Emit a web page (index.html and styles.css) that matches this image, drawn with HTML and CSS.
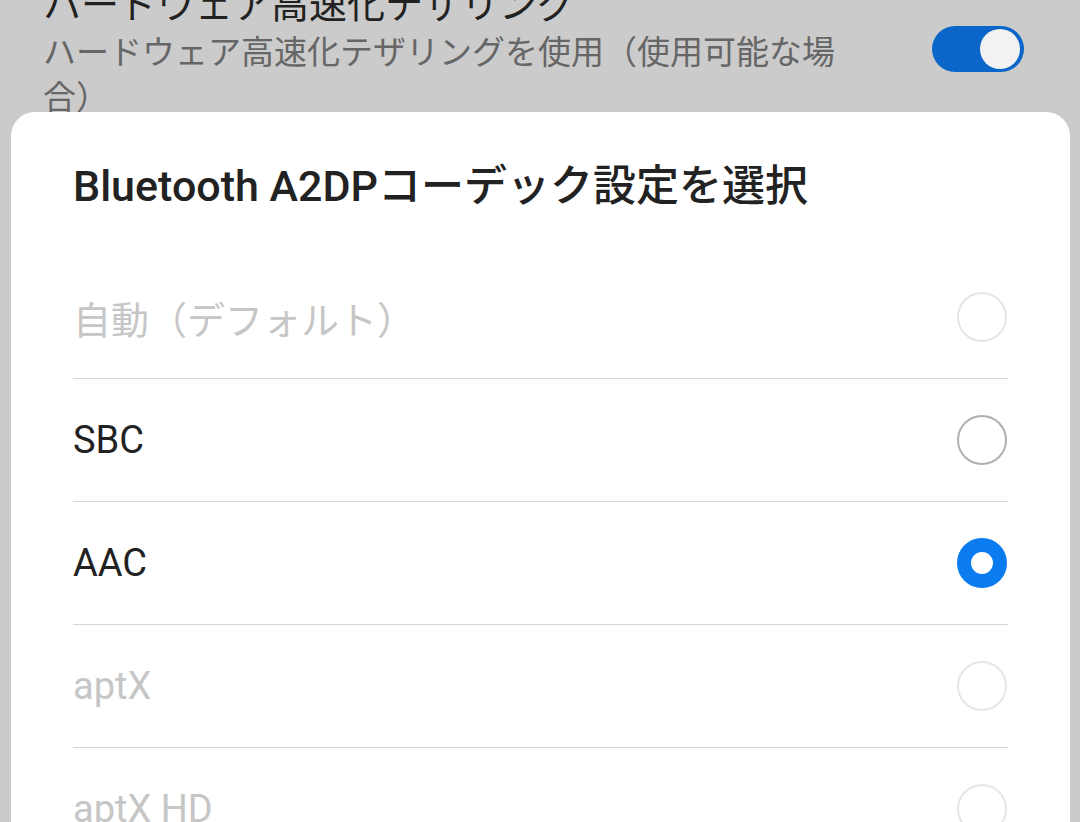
FILE: index.html
```html
<!DOCTYPE html>
<html lang="ja">
<head>
<meta charset="utf-8">
<link rel="stylesheet" href="styles.css">
</head>
<body>
<div class="screen">
  <div class="setting">
    <div class="setting-text">
      <div class="setting-title">ハードウェア高速化テザリング</div>
      <div class="setting-sub">ハードウェア高速化テザリングを使用（使用可能な場合）</div>
    </div>
    <div class="toggle"><div class="thumb"></div></div>
  </div>

  <div class="dialog">
    <div class="dialog-title">Bluetooth A2DPコーデック設定を選択</div>
    <ul class="options">
      <li class="option disabled"><span class="label">自動（デフォルト）</span><span class="radio"></span></li>
      <li class="option"><span class="label">SBC</span><span class="radio"></span></li>
      <li class="option"><span class="label">AAC</span><span class="radio checked"></span></li>
      <li class="option disabled"><span class="label">aptX</span><span class="radio"></span></li>
      <li class="option disabled"><span class="label">aptX HD</span><span class="radio"></span></li>
    </ul>
  </div>
</div>
</body>
</html>
```
FILE: styles.css
```css
html, body {
  margin: 0;
  padding: 0;
}
body {
  background: #cbcbcb;
  font-family: Roboto, "Noto Sans CJK JP", sans-serif;
  width: 1080px;
  height: 822px;
  overflow: hidden;
}
.screen {
  position: relative;
  width: 1080px;
  height: 822px;
  overflow: hidden;
}
.setting {
  display: flex;
  align-items: center;
  padding-left: 43px;
  margin-top: -18px;
}
.setting-text {
  width: 800px;
}
.setting-title {
  font-size: 38px;
  line-height: 46px;
  color: #222;
}
.setting-sub {
  font-size: 33px;
  line-height: 45px;
  color: #666;
  margin-top: 2px;
}
.toggle {
  margin-left: 89px;
  margin-top: -4px;
  width: 92px;
  height: 46px;
  border-radius: 23px;
  background: #0a66c8;
  box-sizing: border-box;
  display: flex;
  align-items: center;
  justify-content: flex-end;
  padding-right: 4px;
}
.thumb {
  width: 40px;
  height: 40px;
  border-radius: 50%;
  background: #f2f2f2;
}
.dialog {
  position: absolute;
  left: 11px;
  top: 112px;
  width: 1059px;
  height: 760px;
  background: #fff;
  border-radius: 24px;
  box-sizing: border-box;
  padding: 0 62px;
}
.dialog-title {
  font-size: 43px;
  font-weight: 500;
  color: #222;
  line-height: 48px;
  margin-top: 50px;
  margin-bottom: 46px;
}
.options {
  list-style: none;
  margin: 0;
  padding: 0;
}
.option {
  display: flex;
  align-items: center;
  justify-content: space-between;
  height: 122px;
  border-bottom: 1px solid #d6d6d6;
  font-size: 38px;
  color: #222;
}
.option.disabled {
  color: #c6c6c6;
}
.radio {
  width: 50px;
  height: 50px;
  box-sizing: border-box;
  border-radius: 50%;
  border: 2px solid #b0b0b0;
  margin-right: 1px;
}
.option.disabled .radio {
  border-color: #e6e6e6;
}
.radio.checked {
  border: 14px solid #0a7cf0;
  background: #fff;
}
```
